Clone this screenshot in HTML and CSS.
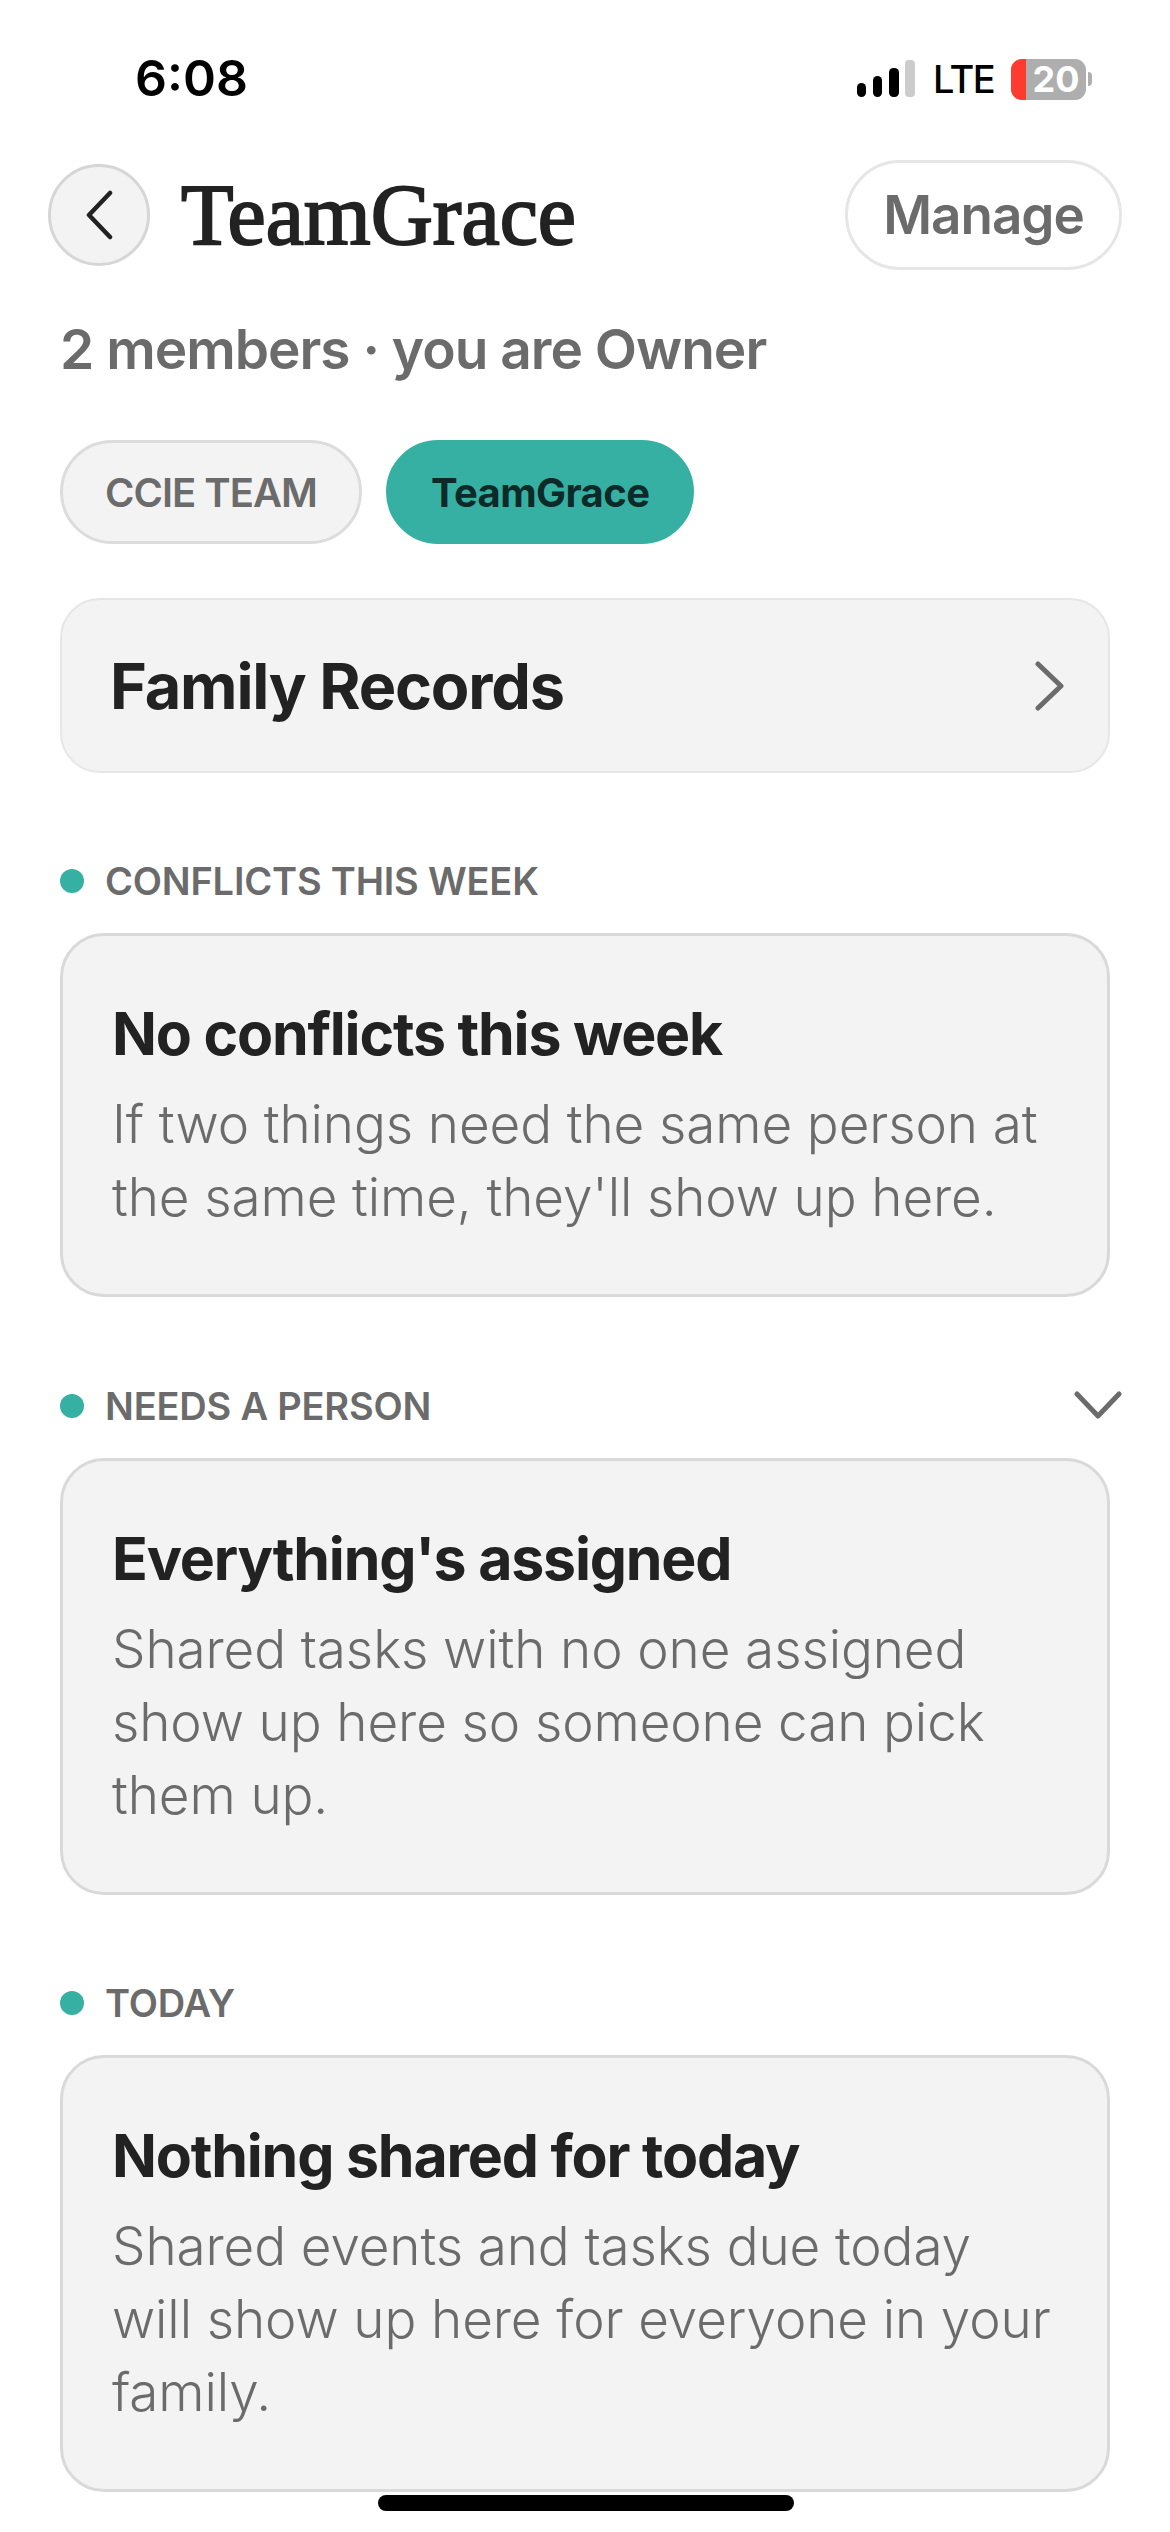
FILE: index.html
```html
<!DOCTYPE html>
<html lang="en">
<head>
  <meta charset="UTF-8">
  <title>TeamGrace</title>
  <link rel="stylesheet" href="styles.css">
</head>
<body>

  <div class="status">
    <span class="time">6:08</span>
    <div class="status-right">
      <svg class="signal" width="58" height="38" viewBox="0 0 58 38">
        <rect x="0" y="23" width="9" height="14" rx="4.5" fill="#000"/>
        <rect x="16" y="16" width="9" height="21" rx="4.5" fill="#000"/>
        <rect x="32" y="8" width="10" height="29" rx="4.5" fill="#000"/>
        <rect x="48" y="0" width="10" height="37" rx="4" fill="#ccc"/>
      </svg>
      <span class="lte">LTE</span>
      <div class="battery">
        <div class="battery-body">
          <span class="battery-low"></span>
          <span class="battery-num">20</span>
        </div>
        <span class="battery-nub"></span>
      </div>
    </div>
  </div>

  <header class="topbar">
    <div class="back">
      <svg width="32" height="50" viewBox="0 0 32 50"><path d="M27 3 L6 25 L27 47" fill="none" stroke="#222" stroke-width="4.5" stroke-linecap="round" stroke-linejoin="round"/></svg>
    </div>
    <h1>TeamGrace</h1>
    <div class="manage">Manage</div>
  </header>

  <main class="content">
    <p class="members">2 members · you are Owner</p>

    <div class="chips">
      <div class="chip">CCIE TEAM</div>
      <div class="chip chip-on">TeamGrace</div>
    </div>

    <div class="records">
      <span>Family Records</span>
      <svg width="32" height="50" viewBox="0 0 32 50"><path d="M4 3 L27 25 L4 47" fill="none" stroke="#6b6b6b" stroke-width="5" stroke-linecap="round" stroke-linejoin="round"/></svg>
    </div>

    <section class="block">
      <div class="label"><i class="dot"></i><span>CONFLICTS THIS WEEK</span></div>
      <div class="card">
        <h2>No conflicts this week</h2>
        <p>If two things need the same person at the same time, they'll show up here.</p>
      </div>
    </section>

    <section class="block">
      <div class="label">
        <i class="dot"></i><span>NEEDS A PERSON</span>
        <svg class="caret" width="48" height="28" viewBox="0 0 48 28"><path d="M3 3 L24 25 L45 3" fill="none" stroke="#6b6b6b" stroke-width="5" stroke-linecap="round" stroke-linejoin="round"/></svg>
      </div>
      <div class="card">
        <h2>Everything's assigned</h2>
        <p>Shared tasks with no one assigned show up here so someone can pick them up.</p>
      </div>
    </section>

    <section class="block">
      <div class="label"><i class="dot"></i><span>TODAY</span></div>
      <div class="card">
        <h2>Nothing shared for today</h2>
        <p>Shared events and tasks due today will show up here for everyone in your family.</p>
      </div>
    </section>
  </main>

  <div class="home-bar"></div>

</body>
</html>
```

FILE: styles.css
```css
* {
  box-sizing: border-box;
}
html, body {
  margin: 0;
  padding: 0;
}
body {
  width: 1170px;
  height: 2532px;
  overflow: hidden;
  background-color: #fff;
  font-family: Inter, "Noto Sans", sans-serif;
  color: #222;
  position: relative;
}

/* status bar */
.status {
  height: 160px;
  padding: 50px 78px 0 135px;
  display: flex;
  justify-content: space-between;
  align-items: flex-start;
}
.time {
  font-size: 50px;
  line-height: 56px;
  font-weight: 600;
  color: #000;
}
.status-right {
  display: flex;
  align-items: center;
  margin-top: 6px;
}
.signal {
  margin-right: 18px;
}
.lte {
  font-size: 38px;
  font-weight: 500;
  color: #000;
  width: 62px;
  letter-spacing: -1.5px;
  margin-right: 16px;
}
.battery {
  display: flex;
  align-items: center;
}
.battery-body {
  width: 75px;
  height: 41px;
  border-radius: 11px;
  background-color: #aeaeae;
  display: flex;
}
.battery-low {
  width: 15px;
  border-radius: 11px 0 0 11px;
  background-color: #ff3b30;
}
.battery-num {
  flex: 1;
  text-align: center;
  color: #fff;
  font-size: 36px;
  line-height: 41px;
  font-weight: 700;
}
.battery-nub {
  width: 4px;
  height: 14px;
  background-color: #aeaeae;
  border-radius: 0 7px 7px 0;
  margin-left: 2px;
}

/* header */
.topbar {
  height: 110px;
  padding: 0 48px;
  display: flex;
  align-items: center;
}
.back {
  width: 102px;
  height: 102px;
  border-radius: 50%;
  background-color: #f3f3f3;
  border: 3px solid #d6d6d6;
  display: flex;
  align-items: center;
  justify-content: center;
}
h1 {
  margin: 0 0 0 31px;
  font-family: "Liberation Serif", serif;
  font-size: 86px;
  font-weight: 400;
  -webkit-text-stroke: 2px #222;
  flex: 1;
}
.manage {
  width: 277px;
  height: 110px;
  border: 3px solid #e6e6e6;
  border-radius: 55px;
  display: flex;
  align-items: center;
  justify-content: center;
  font-size: 53px;
  font-weight: 600;
  color: #6b6b6b;
  letter-spacing: -1px;
}

.content {
  padding: 0 60px;
}
.members {
  margin: 44px 0 0;
  font-size: 55px;
  line-height: 70px;
  font-weight: 600;
  color: #6b6b6b;
  letter-spacing: -1px;
}

/* family chips */
.chips {
  display: flex;
  gap: 24px;
  margin-top: 56px;
}
.chip {
  height: 104px;
  padding: 0 42px;
  border-radius: 52px;
  background-color: #f3f3f3;
  border: 3px solid #dcdcdc;
  display: flex;
  align-items: center;
  font-size: 40px;
  font-weight: 600;
  color: #6b6b6b;
  letter-spacing: -1px;
}
.chip-on {
  background-color: #37b0a4;
  border-color: #37b0a4;
  color: #0c2b28;
  font-weight: 700;
  letter-spacing: -0.6px;
}

.records {
  margin-top: 54px;
  height: 175px;
  padding: 0 42px 0 48px;
  border-radius: 40px;
  background-color: #f3f3f3;
  border: 2px solid #e6e6e6;
  display: flex;
  align-items: center;
  justify-content: space-between;
  font-size: 63px;
  font-weight: 700;
  letter-spacing: -1.2px;
}

/* sections */
.block {
  margin-top: 86px;
}
.block + .block {
  margin-top: 86.5px;
}
.label {
  height: 44px;
  display: flex;
  align-items: center;
  font-size: 38px;
  font-weight: 600;
  color: #6b6b6b;
  letter-spacing: -0.2px;
  position: relative;
}
.dot {
  width: 24px;
  height: 24px;
  border-radius: 50%;
  background-color: #37b0a4;
  margin-right: 21px;
}
.caret {
  position: absolute;
  right: -12px;
  top: 7px;
}
.card {
  margin-top: 30px;
  padding: 62px 49px 60px;
  border-radius: 44px;
  background-color: #f3f3f3;
  border: 3px solid #d9d9d9;
}
.card h2 {
  margin: 0;
  font-size: 59px;
  line-height: 72px;
  font-weight: 700;
  letter-spacing: -1.2px;
}
.card p {
  margin: 18px 0 0;
  font-size: 53px;
  line-height: 73px;
  font-weight: 300;
  color: #6b6b6b;
  letter-spacing: -0.1px;
}

.home-bar {
  position: absolute;
  left: 378px;
  top: 2495px;
  width: 416px;
  height: 16px;
  border-radius: 8px;
  background-color: #000;
}
```
